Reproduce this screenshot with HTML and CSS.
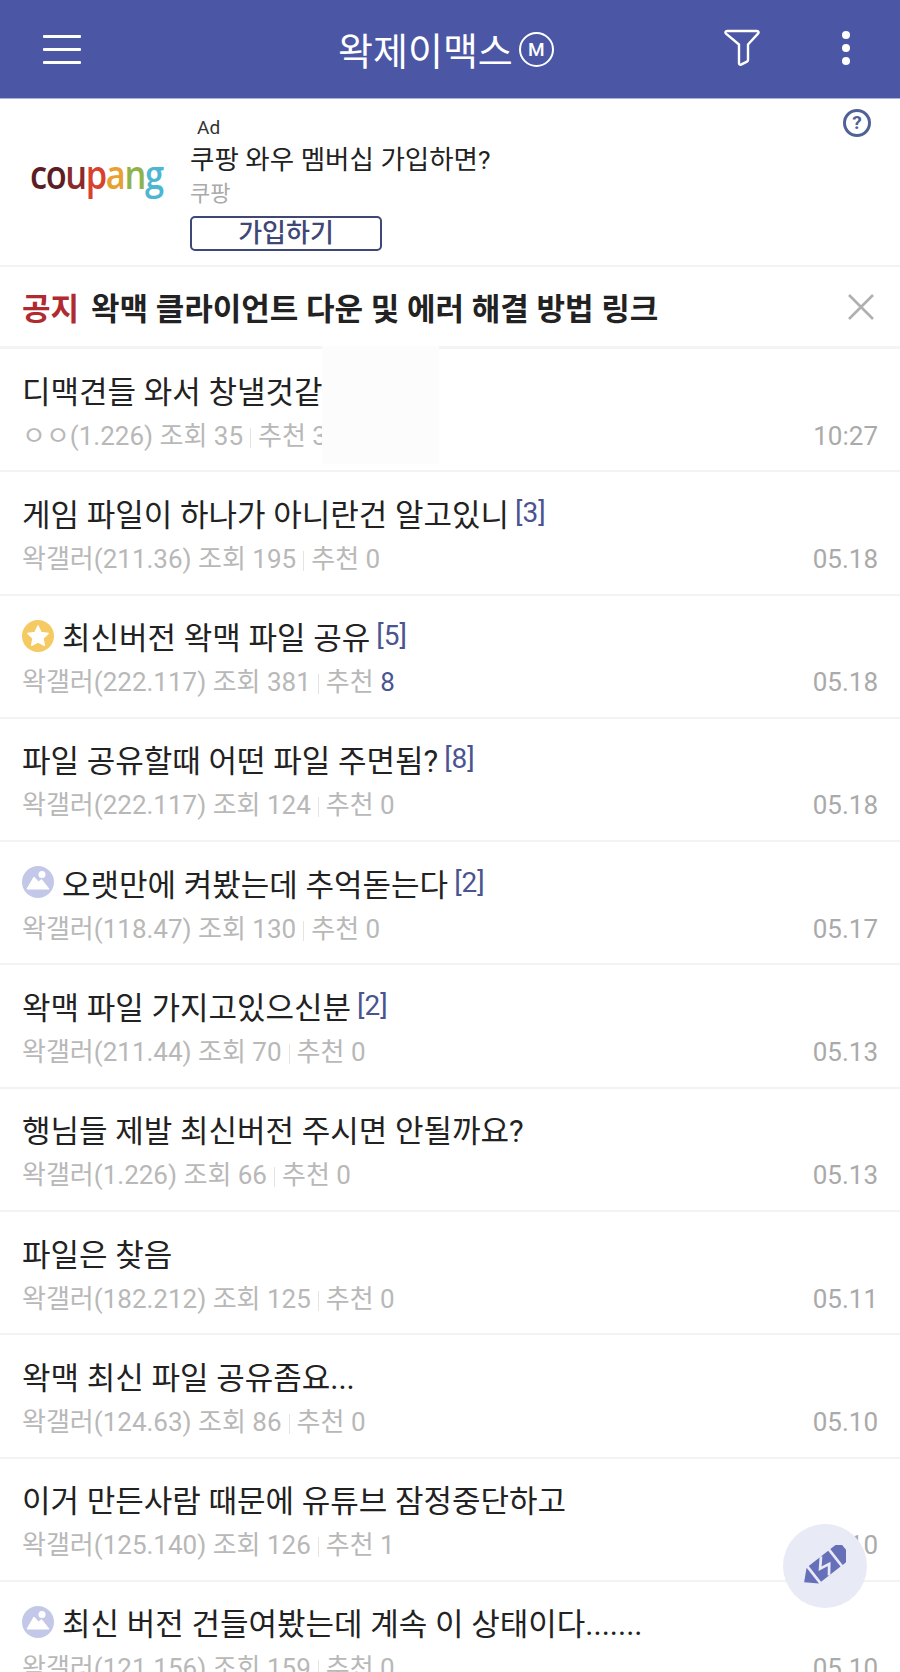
FILE: index.html
```html
<!DOCTYPE html>
<html lang="ko">
<head>
  <meta charset="utf-8">
  <title>왁제이맥스 갤러리</title>
  <link rel="stylesheet" href="styles.css">
</head>
<body>
  <div class="page">
    <div class="topbar">
      <div class="menu-btn"><span></span><span></span><span></span></div>
      <div class="gall-name">왁제이맥스<span class="mark">M</span></div>
      <svg class="filter-icon" width="36" height="37" viewBox="0 0 36 37" fill="none" stroke="#fff" stroke-width="2.4" stroke-linejoin="round">
        <path d="M3 2h30c1.6 0 2 1.500 1 2.600L24 15.500V31c0 .8-.4 1.300-1 1.600l-6 3c-1 .4-2-.2-2-1.300V15.500L2 4.600C1 3.500 1.400 2 3 2z"/>
      </svg>
      <div class="more-btn"><span></span><span></span><span></span></div>
    </div>

    <div class="ad">
      <div class="ad-logo">
        <div class="ad-logo-text"><span class="c1">c</span><span class="c2">o</span><span class="c3">u</span><span class="c4">p</span><span class="c5">a</span><span class="c6">n</span><span class="c7">g</span></div>
      </div>
      <div class="ad-body">
        <div class="ad-label">Ad</div>
        <div class="ad-title">쿠팡 와우 멤버십 가입하면?</div>
        <div class="ad-sub">쿠팡</div>
        <div class="ad-btn">가입하기</div>
      </div>
      <div class="ad-help">?</div>
    </div>

    <div class="notice">
      <span class="notice-tag">공지</span>
      <span class="notice-text">왁맥 클라이언트 다운 및 에러 해결 방법 링크</span>
      <svg class="notice-close" width="28" height="28" viewBox="0 0 28 28" stroke="#b0b0b0" stroke-width="2.600">
        <path d="M2 2l24 24M26 2L2 26"/>
      </svg>
    </div>

    <ul class="list">
      <li class="row">
        <div class="title">디맥견들 와서 창낼것같다</div>
        <div class="meta"><span>ㅇㅇ(1.226) 조회 35<i class="bar"></i>추천 3</span><span class="date">10:27</span></div>
        <div class="smudge"></div>
      </li>
      <li class="row">
        <div class="title">게임 파일이 하나가 아니란건 알고있니<span class="count">[3]</span></div>
        <div class="meta"><span>왁갤러(211.36) 조회 195<i class="bar"></i>추천 0</span><span class="date">05.18</span></div>
      </li>
      <li class="row">
        <div class="title">
          <svg class="badge" width="32" height="32" viewBox="0 0 32 32"><circle cx="16" cy="16" r="16" fill="#f6ca62"/><path d="M16 6l3.100 6.500 7 .9-5.100 4.900 1.300 7L16 21.900 9.700 25.300l1.300-7-5.100-4.900 7-.9z" fill="#fff" stroke="#fff" stroke-width="1.500" stroke-linejoin="round"/></svg>
          최신버전 왁맥 파일 공유<span class="count">[5]</span>
        </div>
        <div class="meta"><span>왁갤러(222.117) 조회 381<i class="bar"></i>추천 <b class="up">8</b></span><span class="date">05.18</span></div>
      </li>
      <li class="row">
        <div class="title">파일 공유할때 어떤 파일 주면됨?<span class="count">[8]</span></div>
        <div class="meta"><span>왁갤러(222.117) 조회 124<i class="bar"></i>추천 0</span><span class="date">05.18</span></div>
      </li>
      <li class="row">
        <div class="title">
          <svg class="badge" width="32" height="32" viewBox="0 0 32 32"><circle cx="16" cy="16" r="16" fill="#c3c8e8"/><path d="M5 23l7-12 4.500 5 3-2.500L27 23z" fill="#fff" stroke="#fff" stroke-linejoin="round"/><circle cx="20" cy="8.500" r="3.500" fill="#fff"/></svg>
          오랫만에 켜봤는데 추억돋는다<span class="count">[2]</span>
        </div>
        <div class="meta"><span>왁갤러(118.47) 조회 130<i class="bar"></i>추천 0</span><span class="date">05.17</span></div>
      </li>
      <li class="row">
        <div class="title">왁맥 파일 가지고있으신분<span class="count">[2]</span></div>
        <div class="meta"><span>왁갤러(211.44) 조회 70<i class="bar"></i>추천 0</span><span class="date">05.13</span></div>
      </li>
      <li class="row">
        <div class="title">행님들 제발 최신버전 주시면 안될까요?</div>
        <div class="meta"><span>왁갤러(1.226) 조회 66<i class="bar"></i>추천 0</span><span class="date">05.13</span></div>
      </li>
      <li class="row">
        <div class="title">파일은 찾음</div>
        <div class="meta"><span>왁갤러(182.212) 조회 125<i class="bar"></i>추천 0</span><span class="date">05.11</span></div>
      </li>
      <li class="row">
        <div class="title">왁맥 최신 파일 공유좀요...</div>
        <div class="meta"><span>왁갤러(124.63) 조회 86<i class="bar"></i>추천 0</span><span class="date">05.10</span></div>
      </li>
      <li class="row">
        <div class="title">이거 만든사람 때문에 유튜브 잠정중단하고</div>
        <div class="meta"><span>왁갤러(125.140) 조회 126<i class="bar"></i>추천 1</span><span class="date">05.10</span></div>
      </li>
      <li class="row">
        <div class="title">
          <svg class="badge" width="32" height="32" viewBox="0 0 32 32"><circle cx="16" cy="16" r="16" fill="#c3c8e8"/><path d="M5 23l7-12 4.500 5 3-2.500L27 23z" fill="#fff" stroke="#fff" stroke-linejoin="round"/><circle cx="20" cy="8.500" r="3.500" fill="#fff"/></svg>
          최신 버전 건들여봤는데 계속 이 상태이다.......
        </div>
        <div class="meta"><span>왁갤러(121.156) 조회 159<i class="bar"></i>추천 0</span><span class="date">05.10</span></div>
      </li>
    </ul>

    <div class="write-btn">
      <svg width="42" height="42" viewBox="-23 -23 46 46">
        <g transform="rotate(-38)">
          <path d="M-29 0l12-11v22z" fill="#6570b8"/>
          <rect x="-14" y="-11" width="27" height="22" fill="#6570b8"/>
          <path d="M16-11h8c3 0 5 2 5 5v12c0 3-2 5-5 5h-8z" fill="#6570b8"/>
          <path d="M3-11L-6-1 5 1l-8 10" fill="none" stroke="#e8eaf6" stroke-width="3"/>
        </g>
      </svg>
    </div>
  </div>
</body>
</html>
```

FILE: styles.css
```css
* {
  box-sizing: border-box;
}

html, body {
  margin: 0;
  padding: 0;
  background-color: #fff;
}

body {
  font-family: Roboto, "Noto Sans CJK KR", sans-serif;
  color: #222;
}

.page {
  position: relative;
  width: 900px;
  height: 1672px;
  overflow: hidden;
}

.topbar {
  display: flex;
  align-items: center;
  height: 99px;
  padding: 0 42px 0 43px;
  background-color: #4b57a5;
  border-bottom: 1px solid #a8b3e4;
  color: #fff;
}

.menu-btn {
  display: flex;
  flex-direction: column;
  gap: 10px;
  width: 38px;
}

.menu-btn span {
  height: 3px;
  background-color: #fff;
  border-radius: 1px;
}

.gall-name {
  display: flex;
  align-items: center;
  margin-left: 257px;
  margin-top: -2px;
  font-size: 38px;
}

.mark {
  display: flex;
  align-items: center;
  justify-content: center;
  width: 35px;
  height: 35px;
  margin-left: 6px;
  margin-top: 2px;
  border: 2px solid #fff;
  border-radius: 50%;
  font-size: 19px;
  font-weight: 500;
}

.filter-icon {
  margin-left: 170px;
  margin-top: -3px;
}

.more-btn {
  display: flex;
  flex-direction: column;
  gap: 5px;
  margin-left: 82px;
  margin-top: -3px;
}

.more-btn span {
  width: 8px;
  height: 8px;
  background-color: #fff;
  border-radius: 50%;
}

.ad {
  position: relative;
  display: flex;
  height: 168px;
  border-bottom: 2px solid #f3f3f3;
}

.ad-logo {
  flex: none;
  width: 190px;
  padding: 47px 0 0 30px;
}

.ad-logo-text {
  font-family: "Open Sans", sans-serif;
  font-size: 40px;
  font-weight: 600;
  letter-spacing: -1.600px;
  white-space: nowrap;
  transform: scaleX(0.86);
  transform-origin: left;
}

.c1, .c2 { color: #5a1e24; }
.c3 { color: #8a2a2c; }
.c4 { color: #d9412f; }
.c5 { color: #e8a02f; }
.c6 { color: #8fb24a; }
.c7 { color: #4db6d2; }

.ad-body {
  padding-top: 14px;
}

.ad-label {
  padding-left: 7px;
  font-size: 19px;
  line-height: 29px;
  color: #333;
}

.ad-title {
  font-size: 26.500px;
  line-height: 36px;
  color: #222;
}

.ad-sub {
  font-size: 22px;
  line-height: 32px;
  color: #aaa;
}

.ad-btn {
  width: 192px;
  height: 35px;
  margin-top: 6px;
  border: 2.500px solid #3e4775;
  border-radius: 5px;
  font-size: 26px;
  font-weight: 500;
  line-height: 30px;
  text-align: center;
  color: #3e4775;
}

.ad-help {
  position: absolute;
  top: 10px;
  right: 29px;
  width: 28px;
  height: 28px;
  border: 3px solid #4f6196;
  border-radius: 50%;
  font-size: 19px;
  font-weight: 700;
  line-height: 22px;
  text-align: center;
  color: #4f6196;
}

.notice {
  display: flex;
  align-items: center;
  height: 82px;
  padding: 0 25px 0 22px;
  border-bottom: 3px solid #f4f4f4;
  font-size: 31px;
  font-weight: 700;
}

.notice-tag {
  margin-right: 12px;
  color: #b02a30;
}

.notice-text {
  flex: 1;
  color: #222;
}

.list {
  margin: 0;
  padding: 0;
  list-style: none;
}

.row {
  position: relative;
  height: 123.300px;
  padding: 19px 22px 0;
  border-bottom: 2px solid #f3f3f3;
}

.title {
  display: flex;
  align-items: center;
  height: 42px;
  font-size: 31px;
  color: #222;
  white-space: nowrap;
}

.badge {
  margin-right: 8px;
}

.count {
  margin-left: 6px;
  font-size: 28px;
  color: #4a5490;
}

.meta {
  display: flex;
  justify-content: space-between;
  margin-top: 8.500px;
  font-size: 26px;
  line-height: 34px;
  color: #b8b8b8;
  white-space: nowrap;
}

.date {
  color: #aaa;
}

.bar {
  display: inline-block;
  width: 1px;
  height: 20px;
  margin: 0 7px;
  vertical-align: -3px;
  background-color: #e4e4e4;
}

.up {
  font-weight: 400;
  color: #4a5490;
}

.smudge {
  position: absolute;
  top: -3px;
  left: 322px;
  width: 117px;
  height: 118px;
  background-color: #fcfcfd;
}

.write-btn {
  position: absolute;
  top: 1524px;
  left: 783px;
  display: flex;
  align-items: center;
  justify-content: center;
  width: 84px;
  height: 84px;
  background-color: #e8eaf6;
  border-radius: 50%;
}
```
